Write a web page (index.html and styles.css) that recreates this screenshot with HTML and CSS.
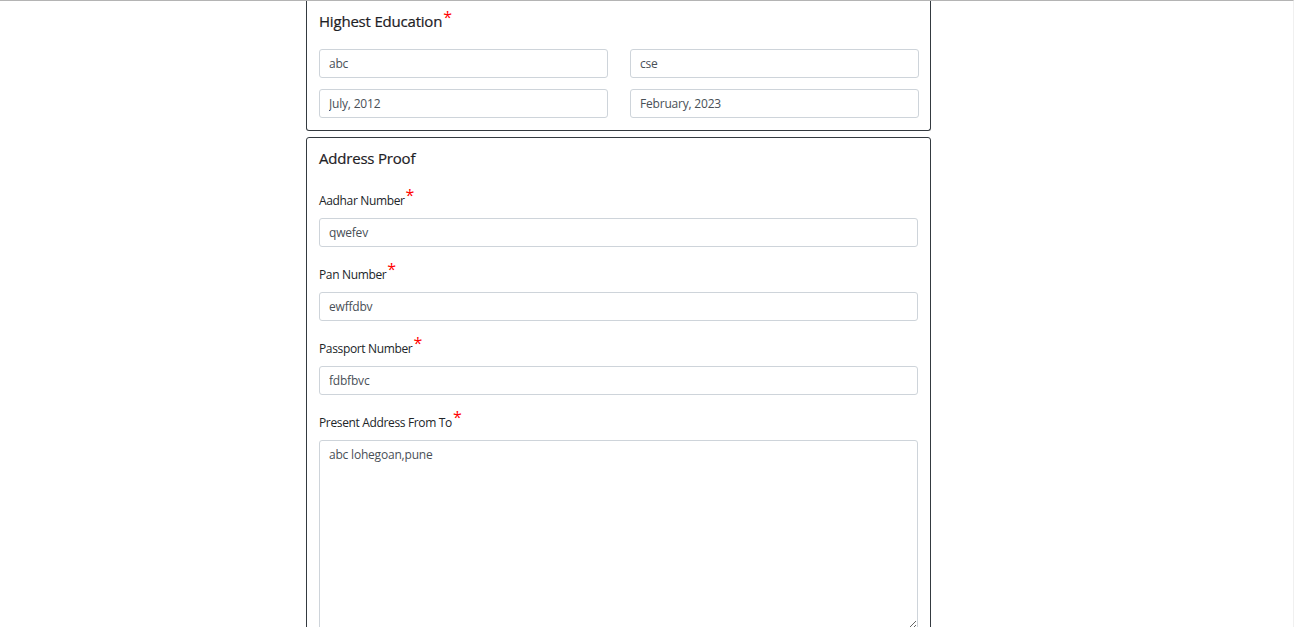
FILE: index.html
```html
<!DOCTYPE html>
<html>
<head>
<meta charset="utf-8">
<link rel="stylesheet" href="styles.css">
</head>
<body>
<div class="page">
  <div class="column">
    <section class="card card-cut">
      <h3 class="card-title">Highest Education<span class="req">*</span></h3>
      <div class="grid2">
        <input class="field" type="text" value="abc">
        <input class="field" type="text" value="cse">
        <input class="field" type="text" value="July, 2012">
        <input class="field" type="text" value="February, 2023">
      </div>
    </section>
    <section class="card">
      <h3 class="card-title">Address Proof</h3>
      <div class="group">
        <label class="label">Aadhar Number<span class="req">*</span></label>
        <input class="field" type="text" value="qwefev">
      </div>
      <div class="group">
        <label class="label">Pan Number<span class="req">*</span></label>
        <input class="field" type="text" value="ewffdbv">
      </div>
      <div class="group">
        <label class="label">Passport Number<span class="req">*</span></label>
        <input class="field" type="text" value="fdbfbvc">
      </div>
      <div class="group">
        <label class="label">Present Address From To<span class="req">*</span></label>
        <textarea class="field area">abc lohegoan,pune</textarea>
      </div>
    </section>
  </div>
</div>
</body>
</html>
```
FILE: styles.css
```css
html, body {
  margin: 0;
  padding: 0;
  background: #fff;
  overflow: hidden;
}
.page {
  height: 627px;
  border-top: 1px solid #b4b4b4;
  border-right: 1px solid #f0f0f0;
  box-sizing: border-box;
  font-family: "Open Sans", "Noto Sans", "Liberation Sans", sans-serif;
  color: #212529;
}
.column {
  width: 625px;
  margin-left: 306px;
  display: flex;
  flex-direction: column;
  gap: 6px;
}
.card {
  border: 1px solid #343a40;
  border-radius: 3px;
  padding: 10px 12px 12px;
  box-sizing: border-box;
}
.card-cut {
  border-top: none;
  border-top-left-radius: 0;
  border-top-right-radius: 0;
}
.card-title {
  margin: 0;
  font-size: 15px;
  font-weight: 500;
  line-height: 20px;
  color: #1e2125;
  letter-spacing: -0.2px;
  -webkit-text-stroke: 0.2px #1e2125;
}
.card-cut .card-title {
  margin-bottom: 18px;
}
.req {
  color: #ff0000;
  font-size: 16px;
  position: relative;
  top: -4px;
  margin-left: 1px;
  line-height: 0;
  -webkit-text-stroke: 0;
}
.grid2 {
  display: grid;
  grid-template-columns: 289px 289px;
  column-gap: 22px;
  row-gap: 11px;
}
.group {
  display: flex;
  flex-direction: column;
  margin-top: 24px;
}
.group + .group {
  margin-top: 19px;
}
.label {
  font-size: 12px;
  line-height: 18px;
  margin-bottom: 8px;
  color: #212529;
  letter-spacing: -0.35px;
}
.field {
  display: block;
  box-sizing: border-box;
  width: 100%;
  height: 29px;
  margin: 0;
  padding: 0 9px;
  border: 1px solid #ced4da;
  border-radius: 3px;
  font-family: "Open Sans", "Noto Sans", "Liberation Sans", sans-serif;
  font-size: 12px;
  letter-spacing: -0.2px;
  color: #495057;
  background: #fff;
  outline: none;
}
.area {
  height: 190px;
  padding: 6px 9px;
  resize: vertical;
  line-height: 16px;
}
```
